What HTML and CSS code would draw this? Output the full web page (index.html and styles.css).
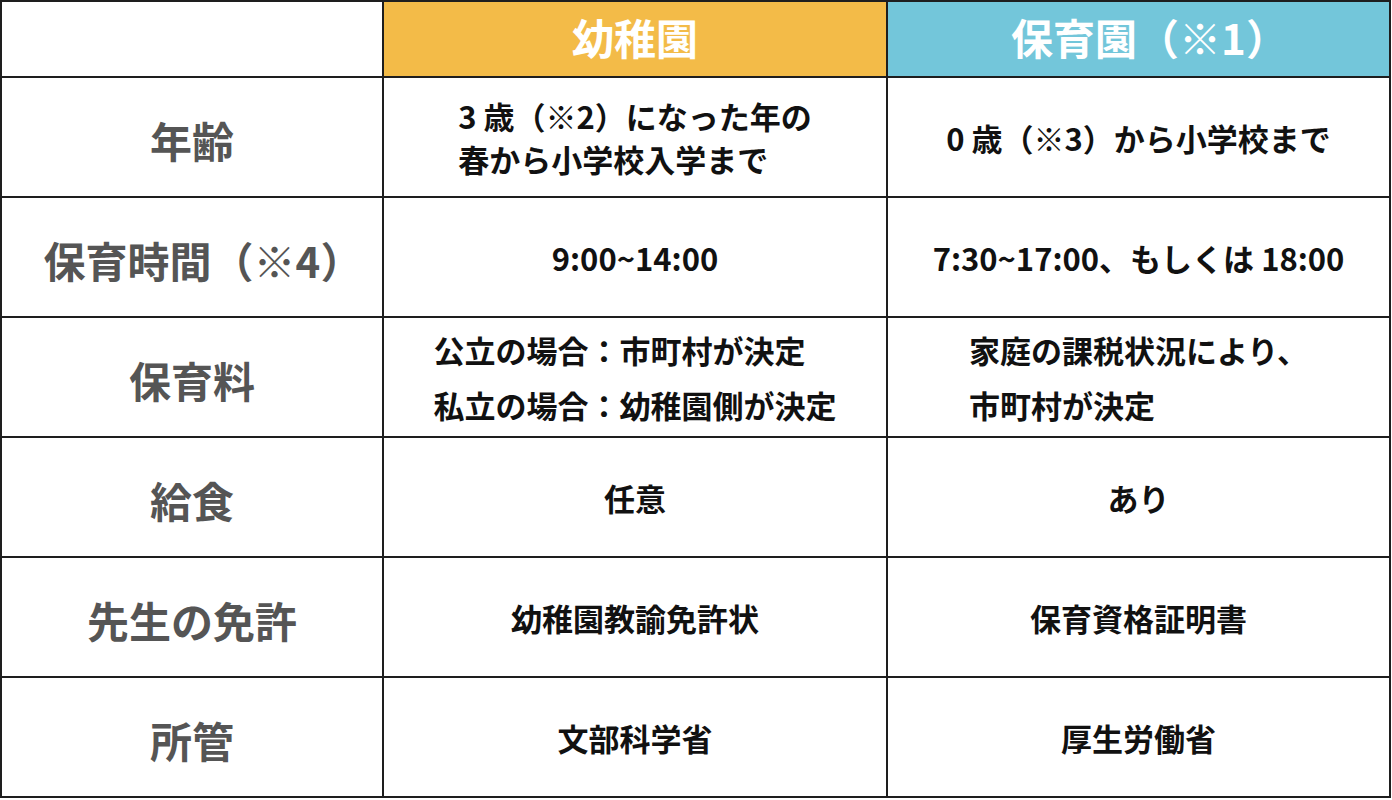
FILE: index.html
```html
<!DOCTYPE html>
<html lang="ja">
<head>
<meta charset="utf-8">
<link rel="stylesheet" href="styles.css">
</head>
<body>
<div class="table">
  <div class="cell corner"></div>
  <div class="cell head head-k">幼稚園</div>
  <div class="cell head head-n paren">保育園（※1）</div>

  <div class="cell label">年齢</div>
  <div class="cell body"><div class="block tight">3 歳（※2）になった年の<br>春から小学校入学まで</div></div>
  <div class="cell body">0 歳（※3）から小学校まで</div>

  <div class="cell label paren">保育時間（※4）</div>
  <div class="cell body">9:00~14:00</div>
  <div class="cell body">7:30~17:00、もしくは 18:00</div>

  <div class="cell label">保育料</div>
  <div class="cell body"><div class="block loose">公立の場合：市町村が決定<br>私立の場合：幼稚園側が決定</div></div>
  <div class="cell body"><div class="block loose">家庭の課税状況により、<br>市町村が決定</div></div>

  <div class="cell label">給食</div>
  <div class="cell body">任意</div>
  <div class="cell body">あり</div>

  <div class="cell label">先生の免許</div>
  <div class="cell body">幼稚園教諭免許状</div>
  <div class="cell body">保育資格証明書</div>

  <div class="cell label">所管</div>
  <div class="cell body">文部科学省</div>
  <div class="cell body">厚生労働省</div>
</div>
</body>
</html>
```
FILE: styles.css
```css
* { box-sizing: border-box; }
html, body { margin: 0; padding: 0; background: #ffffff; }
body {
  font-family: "Noto Sans CJK JP", "Noto Sans", sans-serif;
  font-weight: 700;
}
.table {
  display: grid;
  grid-template-columns: 380px 502px 501px;
  grid-template-rows: 74px repeat(6, 118px);
  gap: 2px;
  padding: 2px;
  background: #1e1e1e;
  width: 1391px;
}
.cell {
  background: #ffffff;
  display: flex;
  align-items: center;
  justify-content: center;
  text-align: center;
}
.head {
  color: #ffffff;
  font-size: 42px;
  line-height: 1;
  padding-bottom: 5px;
}
.head-k { background: #f3bb48; }
.head-n { background: #73c6da; }
.label {
  color: #555555;
  font-size: 42px;
  line-height: 1;
  padding-top: 6px;
}
.paren { padding-left: 22px; }
.body {
  color: #111111;
  font-size: 31px;
  line-height: 1;
}
.block {
  text-align: left;
}
.tight { line-height: 43px; }
.loose { line-height: 55px; }
```
